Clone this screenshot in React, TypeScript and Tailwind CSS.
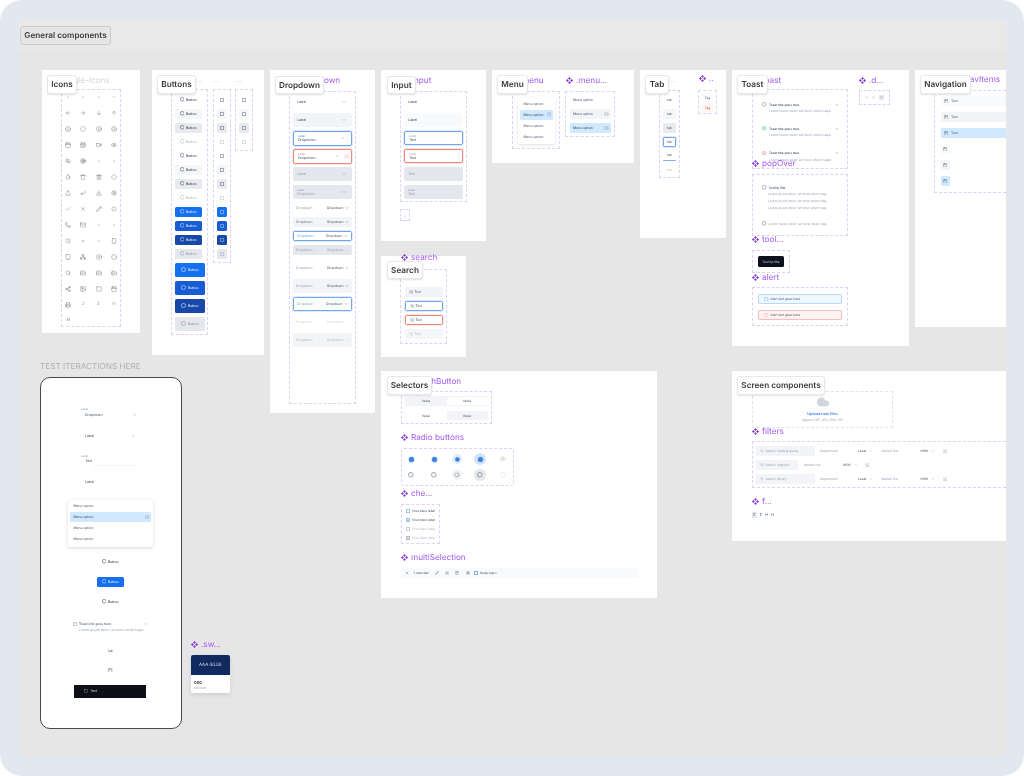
import React from "react";
import {
  ChevronLeft, ChevronRight, ChevronUp, ChevronDown, ArrowLeft, ArrowRight, ArrowDown, ArrowUp,
  Smile, Frown, CircleDashed, Meh, Calendar, CalendarDays, Video, Eye, EyeOff, Target, Timer, Trash, Trash2, Diamond,
  Upload, CornerDownLeft, Download, Settings, Check, X, Pencil, Loader, Phone, Mail, Dot, List, Plus, Minus, Smartphone,
  Tablet, Network, Disc, Circle, Search, HardDrive, Share2, Image, Square, Printer, Cloud, CircleCheck, AlertCircle,
} from "lucide-react";

const BLUE = "border border-[#6fa8ea] shadow-[0_0_0_0.75px_#d5e5f9]";
const RED = "border border-[#e8897e] shadow-[0_0_0_0.75px_#f9dcd8]";

const Comp = () => (
  <svg viewBox="0 0 10 10" className="w-[7px] h-[7px] shrink-0" fill="#7e2fd6">
    <path d="M5 0 7 2 5 4 3 2Z M5 6 7 8 5 10 3 8Z M0 5 2 3 4 5 2 7Z M10 5 8 3 6 5 8 7Z" />
  </svg>
);
const Ring = ({ className = "w-[4.5px] h-[4.5px]", fill = "none" }: { className?: string; fill?: string }) => (
  <svg viewBox="0 0 10 10" className={`shrink-0 ${className}`}>
    <circle cx="5" cy="5" r="4.2" fill={fill} stroke="currentColor" strokeWidth="1.3" />
  </svg>
);

const Panel = ({ className }: { className: string }) => <div className={`absolute bg-white ${className}`} />;
const Dash = ({ className, children }: { className: string; children?: React.ReactNode }) => (
  <div className={`absolute border border-dashed border-[#dcd2f8] rounded-[1px] ${className}`}>{children}</div>
);
const Title = ({ className, children, muted }: { className: string; children: React.ReactNode; muted?: boolean }) => (
  <div className={`absolute flex items-center gap-[3px] h-[10px] text-[8.2px] leading-none whitespace-nowrap ${muted ? "text-[#d6d6d6]" : "text-[#a35af0]"} ${className}`}>
    {!muted && <Comp />}
    <span>{children}</span>
  </div>
);
const Dots = ({ className }: { className: string }) => (
  <div className={`absolute text-[7px] leading-none text-[#b58af0] ${className}`}>...</div>
);
const Tagline = ({ className, children }: { className: string; children: React.ReactNode }) => (
  <div className={`absolute flex items-center justify-center bg-white rounded-[3px] border border-[#e8e8e8] shadow-[0_1px_2px_rgba(0,0,0,0.12)] text-[8.2px] font-semibold text-[#3a3a3a] leading-none whitespace-nowrap ${className}`}>
    {children}
  </div>
);
const T = ({ className = "", children }: { className?: string; children: React.ReactNode }) => (
  <span className={`leading-none whitespace-nowrap translate-y-[0.6px] ${className}`}>{children}</span>
);
const Cell = ({ children }: { children: React.ReactNode }) => (
  <div className="h-[16px] flex items-center justify-center text-[#6b6b6b]">{children}</div>
);

const sm = { size: 4, strokeWidth: 2 };
const md = { size: 6, strokeWidth: 1.6 };
const iconCells: React.ReactNode[] = [
  <ChevronLeft {...sm} />, <ChevronRight {...sm} />, <ChevronUp {...sm} />, <ChevronDown {...sm} />,
  <ArrowLeft {...md} />, <ArrowRight {...md} />, <ArrowDown {...md} />, <ArrowUp {...md} />,
  <Frown {...md} />, <CircleDashed {...md} />, <Smile {...md} />, <Meh {...md} />,
  <Calendar {...md} />, <CalendarDays {...md} />, <Video {...md} />, <Eye {...md} />,
  <EyeOff {...md} />, <Target {...md} />, <ChevronLeft {...sm} />, <ChevronRight {...sm} />,
  <Timer {...md} />, <Trash {...md} />, <Trash2 {...md} />, <Diamond {...md} />,
  <Upload {...md} />, <CornerDownLeft {...md} />, <Download {...md} />, <Settings {...md} />,
  <Check {...md} />, <X {...md} />, <Pencil {...md} />, <Loader {...md} />,
  <Phone {...md} />, <Mail {...md} />, <Dot {...sm} />, <Dot {...sm} />,
  <List {...md} />, <Plus {...sm} />, <Minus {...sm} />, <Smartphone {...md} />,
  <Tablet {...md} />, <Network {...md} />, <Disc {...md} />, <Circle {...md} />,
  <Search {...md} />, <HardDrive {...md} />, <HardDrive {...md} />, <HardDrive {...md} />,
  <Share2 {...md} />, <Image {...md} />, <Square {...md} />, <Calendar {...md} />,
  <Printer {...md} />, <span className="text-[4.5px] text-[#999]">Z</span>, <span className="text-[4.5px] text-[#999]">Σ</span>, <span className="text-[4.5px] text-[#999]">H</span>,
  <span className="text-[4.5px] text-[#888]">N</span>,
];

const styles: Record<string, string> = {
  ghost: "text-[#475467]",
  light: "bg-[#f5f6f8] text-[#475467]",
  mid: "bg-[#e8eaee] text-[#475467]",
  off: "text-[#b4bac4]",
  b1: "bg-[#1570ef] text-[#cfe2fb]",
  b2: "bg-[#175cd3] text-[#cfe2fb]",
  b3: "bg-[#1849a9] text-[#cfe2fb]",
  fill: "bg-[#e4e7ec] text-[#98a2b3]",
};
const Btn = ({ v }: { v: string }) => (
  <div className={`w-[26.5px] h-[10px] rounded-[1.5px] flex items-center justify-center gap-[1.5px] ${styles[v]}`}>
    <Ring />
    <T className="text-[3.4px] font-semibold">Button</T>
  </div>
);
const BtnLg = ({ v }: { v: string }) => (
  <div className={`w-[29.5px] h-[14px] rounded-[1.5px] flex items-center justify-center gap-[2px] ${styles[v]}`}>
    <Ring className="w-[5px] h-[5px]" />
    <T className="text-[3.4px] font-semibold">Button</T>
  </div>
);
const IconBtn = ({ v }: { v: string }) => (
  <div className={`w-[10px] h-[10px] rounded-[1.5px] flex items-center justify-center ${styles[v]}`}>
    <svg viewBox="0 0 10 10" className="w-[4px] h-[4px]" fill="none" stroke="currentColor" strokeWidth="1.3"><rect x="1" y="1" width="8" height="8" rx="1" /></svg>
  </div>
);

const Slot = ({ h, children }: { h: "s" | "m"; children: React.ReactNode }) => (
  <div className={`flex items-center ${h === "m" ? "h-[18px]" : "h-[14px]"}`}>{children}</div>
);
const Chev = ({ c = "text-[#667085]" }: { c?: string }) => <ChevronDown size={4} strokeWidth={2} className={`shrink-0 ${c}`} />;
const DD = ({ box, text, label, tail }: { box: string; text: string; label?: string; tail?: React.ReactNode }) => (
  <div className={`w-full flex items-center pl-[4px] pr-[6px] rounded-[2px] ${box}`}>
    <div className="flex-1 flex flex-col gap-[1px]">
      {label && <T className={`text-[2.8px] ${label}`}>Label</T>}
      <T className="text-[3.6px]">{text}</T>
    </div>
    <Chev />
    {tail}
  </div>
);
const DD2 = ({ box, left, right }: { box: string; left: string; right: string }) => (
  <div className={`w-full flex items-center justify-between pl-[3px] pr-[3px] rounded-[1.5px] ${box}`}>
    <T className={`text-[3.4px] ${left}`}>Dropdown</T>
    <div className={`flex items-center gap-[1.5px] ${right}`}>
      <T className="text-[3.4px]">Dropdown</T>
      <Chev c="text-current" />
    </div>
  </div>
);
const Inp = ({ box, text, label }: { box: string; text: string; label?: string }) => (
  <div className={`w-full flex flex-col justify-center gap-[1px] pl-[4px] rounded-[2px] ${box}`}>
    {label && <T className={`text-[2.8px] ${label}`}>Label</T>}
    <T className="text-[3.6px]">{text}</T>
  </div>
);
const Srch = ({ box, c = "text-[#475467]" }: { box: string; c?: string }) => (
  <div className={`w-full h-[10px] rounded-[1.5px] flex items-center gap-[2px] pl-[4px] ${box} ${c}`}>
    <Search size={4} strokeWidth={2} />
    <T className="text-[3.3px]">Text</T>
  </div>
);
const MenuRow = ({ box = "", text = "text-[#475467]", tick, w = "w-full" }: { box?: string; text?: string; tick?: boolean; w?: string }) => (
  <div className={`h-[10px] ${w} flex items-center justify-between pl-[3.5px] pr-[2px] rounded-[1px] ${box}`}>
    <T className={`text-[3.4px] ${text}`}>Menu option</T>
    {tick && <CircleCheck size={4.5} strokeWidth={1.5} className="text-[#667085]" />}
  </div>
);
const Toast = ({ dot, fill }: { dot: string; fill?: string }) => (
  <div className="h-[24.3px]">
    <div className="flex items-center">
      <span className={`ml-[9px] ${dot}`}><Ring className="w-[4.5px] h-[4.5px]" fill={fill} /></span>
      <T className="text-[3.15px] font-medium text-[#344054] ml-[2.5px] flex-1">Toast title goes here</T>
      <X size={3.5} strokeWidth={2} className="text-[#667085] mr-[9px]" />
    </div>
    <T className="block text-[3.25px] text-[#98a2b3] ml-[16px] mt-[2.5px] h-[4px]">Lorem ipsum dolor set tener etiem hagar</T>
  </div>
);
const Line = () => <T className="block text-[3.2px] text-[#98a2b3]">Lorem ipsum dolor set tener etiem hag</T>;
const Tab = ({ box, c = "text-[#475467]" }: { box: string; c?: string }) => (
  <div className={`w-[12.5px] h-[10px] flex items-center justify-center rounded-[1px] ${box}`}>
    <T className={`text-[3.2px] ${c}`}>tab</T>
  </div>
);
const Nav = ({ box }: { box: string }) => (
  <div className={`h-[10px] w-full flex items-center gap-[3px] pl-[3px] ${box}`}>
    <Calendar size={4.5} strokeWidth={1.6} className="text-[#475467]" />
    <T className="text-[3.4px] text-[#475467]">Text</T>
  </div>
);
const NavI = ({ box }: { box: string }) => (
  <div className={`h-[10px] w-[9px] flex items-center justify-center rounded-[1px] ${box}`}>
    <Calendar size={4.5} strokeWidth={1.6} className="text-[#475467]" />
  </div>
);
const Radio = ({ on, halo, ring = "text-[#7a8494]", fill = "none" }: { on?: boolean; halo: string; ring?: string; fill?: string }) => (
  <div className={`w-[12px] h-[12px] rounded-full flex items-center justify-center ${halo}`}>
    {on ? (
      <span className="w-[5px] h-[5px] rounded-full bg-[#3b82e0] shadow-[0_0_0_0.6px_#a9c8f5]" />
    ) : (
      <span className={ring}><Ring className="w-[5.5px] h-[5.5px]" fill={fill} /></span>
    )}
  </div>
);
const Check4 = ({ box, text, on }: { box: string; text: string; on?: boolean }) => (
  <div className="flex items-center gap-[2px] h-[9px]">
    <span className={`w-[4px] h-[4px] rounded-[0.5px] border flex items-center justify-center ${box}`}>{on && <Check size={3} strokeWidth={2} />}</span>
    <T className={`text-[3.2px] ${text}`}>Checkbox label</T>
  </div>
);
const FilterBox = ({ w, text }: { w: string; text: string }) => (
  <div className={`h-[10px] ${w} bg-[#f2f4f7] rounded-[1px] flex items-center gap-[2px] pl-[4px] text-[#98a2b3] shrink-0`}>
    <Search size={3.5} strokeWidth={2} />
    <T className="text-[3.2px]">{text}</T>
  </div>
);
const Pick = ({ text, w }: { text: string; w: string }) => (
  <div className={`flex items-center gap-[3px] ${w} shrink-0 text-[#475467]`}>
    <T className="text-[3.2px] font-medium">{text}</T>
    <Chev c="text-[#98a2b3]" />
  </div>
);
const FT = ({ w, text }: { w: string; text: string }) => <T className={`text-[3.2px] text-[#98a2b3] ${w} shrink-0`}>{text}</T>;
const Sliders = () => <List size={4.5} strokeWidth={1.6} className="text-[#667085] shrink-0" />;

export default function App() {
  return (
    <div className="relative w-[1024px] h-[776px] overflow-hidden bg-white [font-family:Inter,'Liberation_Sans',sans-serif] [text-rendering:geometricPrecision] blur-[0.5px]">
      <div className="absolute inset-0 bg-[#e2e8f1] rounded-[22px]" />
      <div className="absolute left-[18px] top-[18px] w-[989px] h-[739px] bg-[#e6e6e6] rounded-[6px]">
        <div className="h-[33px] bg-[#e9e9e9] rounded-t-[6px]" />
      </div>
      <div className="absolute left-[20px] top-[26px] w-[91px] h-[19px] flex items-center justify-center rounded-[3px] bg-[#e6e6e6] border border-[#cccccc] text-[8.2px] font-semibold text-[#3a3a3a] whitespace-nowrap">General components</div>

      {/* Icons */}
      <Panel className="left-[42px] top-[70px] w-[98px] h-[263px]" />
      <Title muted className="left-[62px] top-[75px]">single-Icons</Title>
      <Dash className="left-[61px] top-[89px] w-[60px] h-[238px]">
        <div className="grid grid-cols-4 w-[61px] -ml-[1.5px] -mt-[1px]">
          {iconCells.map((c, i) => <Cell key={i}>{c}</Cell>)}
        </div>
      </Dash>
      <Tagline className="left-[47px] top-[75px] w-[30px] h-[19px]">Icons</Tagline>

      {/* Buttons */}
      <Panel className="left-[152px] top-[70px] w-[112px] h-[285px]" />
      <Dots className="left-[196px] top-[76px]" />
      <Dots className="left-[213px] top-[76px]" />
      <Dots className="left-[236px] top-[76px]" />
      <Dash className="left-[171px] top-[89px] w-[37px] h-[246px] pl-[3px] pt-[4.5px] flex flex-col">
        <div className="flex flex-col gap-[4px]">
          {["ghost", "light", "mid", "off", "ghost", "light", "mid", "off", "b1", "b2", "b3", "fill"].map((v, i) => <Btn key={i} v={v} />)}
        </div>
        <div className="flex flex-col gap-[4px] mt-[4px]">
          {["b1", "b2", "b3", "fill"].map((v, i) => <BtnLg key={i} v={v} />)}
        </div>
      </Dash>
      <Dash className="left-[213px] top-[89px] w-[18px] h-[174px] pl-[3px] pt-[4.5px] flex flex-col gap-[4px]">
        {["ghost", "light", "mid", "off", "ghost", "light", "mid", "off", "b1", "b2", "b3", "fill"].map((v, i) => <IconBtn key={i} v={v} />)}
      </Dash>
      <Dash className="left-[235px] top-[89px] w-[18px] h-[62px] pl-[3px] pt-[4.5px] flex flex-col gap-[4px]">
        {["ghost", "light", "mid", "off"].map((v, i) => <IconBtn key={i} v={v} />)}
      </Dash>
      <Tagline className="left-[157px] top-[75px] w-[39px] h-[19px]">Buttons</Tagline>

      {/* Dropdown */}
      <Panel className="left-[270px] top-[70px] w-[105px] h-[343px]" />
      <Title className="left-[291px] top-[75px]">dropdown</Title>
      <Dash className="left-[289px] top-[91px] w-[67px] h-[313px] px-[3px] pt-[1px] text-[#475467]">
        <Slot h="m"><DD box="h-[14px]" text="Label" /></Slot>
        <Slot h="m"><DD box="h-[14px] bg-[#f2f4f7]" text="Label" /></Slot>
        <Slot h="m"><DD box={`h-[15px] ${BLUE}`} text="Dropdown" label="text-[#4a90e2]" /></Slot>
        <Slot h="m"><DD box={`h-[15px] ${RED} !pr-[2px]`} text="Dropdown" label="text-[#e58a80]" tail={<AlertCircle size={5} strokeWidth={1.5} className="text-[#ef9a92] ml-[5px]" />} /></Slot>
        <Slot h="m"><DD box="h-[14px] bg-[#e4e7ec] text-[#98a2b3]" text="Label" /></Slot>
        <Slot h="m"><DD box="h-[14px] bg-[#e4e7ec] text-[#98a2b3]" text="Dropdown" label="text-[#98a2b3]" /></Slot>
        <Slot h="s"><DD2 box="h-[10px]" left="text-[#98a2b3]" right="text-[#475467]" /></Slot>
        <Slot h="s"><DD2 box="h-[10px] bg-[#f2f4f7]" left="text-[#667085]" right="text-[#475467]" /></Slot>
        <Slot h="s"><DD2 box={`h-[10px] ${BLUE}`} left="text-[#6ea5ea]" right="text-[#475467]" /></Slot>
        <Slot h="s"><DD2 box="h-[10px] bg-[#e4e7ec]" left="text-[#98a2b3]" right="text-[#98a2b3]" /></Slot>
        <div className="h-[2px]" />
        <Slot h="m"><DD2 box="h-[14px]" left="text-[#98a2b3]" right="text-[#475467]" /></Slot>
        <Slot h="m"><DD2 box="h-[14px] bg-[#f2f4f7]" left="text-[#98a2b3]" right="text-[#475467]" /></Slot>
        <Slot h="m"><DD2 box={`h-[14px] ${BLUE}`} left="text-[#98a2b3]" right="text-[#475467]" /></Slot>
        <Slot h="m"><DD2 box="h-[14px]" left="text-[#d0d5dd]" right="text-[#d0d5dd]" /></Slot>
        <Slot h="m"><DD2 box="h-[14px] bg-[#f2f4f7]" left="text-[#b4bac4]" right="text-[#b4bac4]" /></Slot>
      </Dash>
      <Tagline className="left-[275px] top-[76px] w-[49px] h-[18px]">Dropdown</Tagline>

      {/* Input */}
      <Panel className="left-[381px] top-[70px] w-[105px] h-[171px]" />
      <Title className="left-[402px] top-[75px]">input</Title>
      <Dash className="left-[400px] top-[91px] w-[67px] h-[111px] px-[3px] pt-[1px] text-[#475467]">
        <Slot h="m"><Inp box="h-[14px]" text="Label" /></Slot>
        <Slot h="m"><Inp box="h-[14px] bg-[#f9fafb]" text="Label" /></Slot>
        <Slot h="m"><Inp box={`h-[14px] ${BLUE}`} text="Text" label="text-[#98a2b3]" /></Slot>
        <Slot h="m"><Inp box={`h-[14px] ${RED}`} text="Text" label="text-[#e58a80]" /></Slot>
        <Slot h="m"><Inp box="h-[14px] bg-[#e4e7ec] text-[#98a2b3]" text="Text" /></Slot>
        <Slot h="m"><Inp box="h-[14px] bg-[#e4e7ec] text-[#98a2b3]" text="Text" label="text-[#98a2b3]" /></Slot>
      </Dash>
      <Dash className="left-[400px] top-[209px] w-[10px] h-[12px] flex items-center justify-center"><T className="text-[3px] text-[#98a2b3]">|</T></Dash>
      <Tagline className="left-[387px] top-[76px] w-[29px] h-[18px]">Input</Tagline>

      {/* Search */}
      <Panel className="left-[381px] top-[256px] w-[85px] h-[101px]" />
      <Title className="left-[401px] top-[252px]">search</Title>
      <Dash className="left-[400px] top-[269px] w-[47px] h-[75px] px-[3.5px] pt-[17px] flex flex-col gap-[4px]">
        <Srch box="bg-[#f2f4f7]" />
        <Srch box={BLUE} />
        <Srch box={RED} />
        <Srch box="bg-[#f5f6f8]" c="text-[#b4bac4]" />
      </Dash>
      <Tagline className="left-[387px] top-[261px] w-[36px] h-[18px]">Search</Tagline>

      {/* Menu */}
      <Panel className="left-[492px] top-[70px] w-[142px] h-[93px]" />
      <Title className="left-[512px] top-[75px]">menu</Title>
      <Title className="left-[566px] top-[75px]">.menu...</Title>
      <Dash className="left-[512px] top-[91px] w-[48px] h-[58px] px-[5px] pt-[5px]">
        <div className="w-[37px] h-[47px] bg-white rounded-[2px] shadow-[0_1px_3px_rgba(0,0,0,0.12)] px-[2px] pt-[1.5px] flex flex-col gap-[1px]">
          <MenuRow />
          <MenuRow box="bg-[#d1e9ff]" text="text-[#344054]" tick />
          <MenuRow />
          <MenuRow />
        </div>
      </Dash>
      <Dash className="left-[565px] top-[91px] w-[50px] h-[46px] px-[3.5px] pt-[3px] flex flex-col gap-[4px]">
        <MenuRow />
        <MenuRow box="bg-[#f2f4f7]" tick />
        <MenuRow box="bg-[#d1e9ff]" text="text-[#344054]" tick />
      </Dash>
      <Tagline className="left-[497px] top-[75px] w-[31px] h-[19px]">Menu</Tagline>

      {/* Tab */}
      <Panel className="left-[640px] top-[70px] w-[86px] h-[168px]" />
      <Dots className="left-[669px] top-[76px]" />
      <Title className="left-[699px] top-[73px]">..</Title>
      <Dash className="left-[659px] top-[90px] w-[21px] h-[88px] pl-[3px] pt-[3.5px] flex flex-col gap-[4px]">
        <Tab box="" />
        <Tab box="bg-[#f5f6f8]" />
        <Tab box="bg-[#e8eaee]" />
        <Tab box={BLUE} />
        <Tab box="border-b border-[#7fb0ea]" />
        <Tab box="" c="text-[#b4bac4]" />
      </Dash>
      <Dash className="left-[698px] top-[90px] w-[19px] h-[24px] px-[3px] pt-[2px] flex flex-col gap-[1px]">
        <div className="h-[9px] flex items-center justify-center bg-[#f9fafb]"><T className="text-[3.2px] text-[#667085]">Tag</T></div>
        <div className="h-[9px] flex items-center justify-center bg-[#fff5f4]"><T className="text-[3.2px] text-[#f04438]">Tag</T></div>
      </Dash>
      <Tagline className="left-[645px] top-[75px] w-[24px] h-[19px]">Tab</Tagline>

      {/* Toast */}
      <Panel className="left-[732px] top-[70px] w-[177px] h-[276px]" />
      <Title className="left-[752px] top-[75px]">toast</Title>
      <Dash className="left-[752px] top-[89px] w-[96px] h-[80px] pt-[12px]">
        <Toast dot="text-[#7a8494]" />
        <Toast dot="text-[#8ad4ab]" fill="#c6f0d8" />
        <Toast dot="text-[#f0a9a9]" fill="#fbd5d5" />
      </Dash>
      <Title className="left-[752px] top-[158px]">popOver</Title>
      <Dash className="left-[752px] top-[174px] w-[96px] h-[62px] pl-[9px] pt-[10px]">
        <div className="flex items-center gap-[2px] mb-[2.5px] text-[#7a8494]">
          <Ring />
          <T className="text-[3.2px] font-medium text-[#475467]">Tooltip title</T>
        </div>
        <div className="flex flex-col gap-[3.6px] ml-[6px]"><Line /><Line /><Line /></div>
        <div className="flex items-center gap-[2px] mt-[12.5px] text-[#7a8494]">
          <Ring />
          <Line />
        </div>
      </Dash>
      <Title className="left-[752px] top-[234px]">tool...</Title>
      <Dash className="left-[752px] top-[250px] w-[38px] h-[23px] flex items-center justify-center">
        <div className="w-[26px] h-[10.5px] bg-[#0c111d] rounded-[1.5px] flex items-center justify-center"><T className="text-[3.2px] text-[#d0d5dd]">Tool tip title</T></div>
      </Dash>
      <Title className="left-[752px] top-[272px]">alert</Title>
      <Dash className="left-[752px] top-[287px] w-[96px] h-[39px] px-[5px] pt-[5.5px] flex flex-col gap-[5.5px]">
        <div className="h-[10.5px] bg-[#eff8ff] border border-[#b2ddff] rounded-[2px] flex items-center gap-[2px] pl-[5px] text-[#7fb0ea]">
          <Ring />
          <T className="text-[3.2px] text-[#475467]">Alert text goes here</T>
        </div>
        <div className="h-[10.5px] bg-[#fef3f2] border border-[#fbbdb6] rounded-[2px] flex items-center gap-[2px] pl-[5px] text-[#f0a9a9]">
          <Ring />
          <T className="text-[3.2px] text-[#475467]">Alert text goes here</T>
        </div>
      </Dash>
      <Title className="left-[859px] top-[75px]">.d...</Title>
      <Dash className="left-[859px] top-[90px] w-[31px] h-[15px] flex items-center justify-center gap-[4px] text-[#667085]">
        <X size={3} strokeWidth={2} />
        <X size={3} strokeWidth={2} />
        <span className="w-[5px] h-[5px] bg-[#e4e7ec] flex items-center justify-center"><X size={3} strokeWidth={2} /></span>
      </Dash>
      <Tagline className="left-[737px] top-[75px] w-[31px] h-[19px]">Toast</Tagline>

      {/* Navigation */}
      <Panel className="left-[915px] top-[70px] w-[91px] h-[257px]" />
      <Title className="left-[955px] top-[74px]">navItems</Title>
      <div className="absolute left-[934px] top-[90px] w-[72px] h-[103px] border-l border-t border-b border-dashed border-[#dcd2f8] pl-[5.5px] pt-[5px] flex flex-col gap-[6px]">
        <Nav box="bg-[#f9fafb]" />
        <Nav box="bg-[#f2f4f7]" />
        <Nav box="bg-[#d1e9ff]" />
        <NavI box="bg-[#f9fafb]" />
        <NavI box="bg-[#f2f4f7]" />
        <NavI box="bg-[#d1e9ff]" />
      </div>
      <Tagline className="left-[920px] top-[75px] w-[51px] h-[19px]">Navigation</Tagline>

      {/* Selectors */}
      <Panel className="left-[381px] top-[371px] w-[276px] h-[227px]" />
      <Title className="left-[401px] top-[376px]">switchButton</Title>
      <Dash className="left-[401px] top-[391px] w-[91px] h-[33px] px-[3px] pt-[4px] flex flex-col gap-[5px]">
        <div className="h-[9.5px] bg-[#f2f4f7] rounded-[2px] flex p-[0.5px]">
          <div className="flex-1 flex items-center justify-center"><T className="text-[3.2px] text-[#475467]">Value</T></div>
          <div className="flex-1 flex items-center justify-center bg-white rounded-[2px]"><T className="text-[3.2px] text-[#475467]">Value</T></div>
        </div>
        <div className="h-[9.5px] bg-[#f2f4f7] rounded-[2px] flex p-[0.5px]">
          <div className="flex-1 flex items-center justify-center bg-white rounded-[2px]"><T className="text-[3.2px] text-[#475467]">Value</T></div>
          <div className="flex-1 flex items-center justify-center"><T className="text-[3.2px] text-[#475467]">Value</T></div>
        </div>
      </Dash>
      <Title className="left-[401px] top-[432px]">Radio buttons</Title>
      <Dash className="left-[401px] top-[448px] w-[113px] h-[38px] rounded-[3px] pl-[3px] pt-[4px] grid gap-y-[4px] gap-x-[11px] content-start [grid-template-columns:repeat(5,12px)]">
        <Radio on halo="" />
        <Radio on halo="" />
        <Radio on halo="bg-[#e3eefc] scale-[0.85]" />
        <Radio on halo="bg-[#d3e3fa]" />
        <Radio halo="" ring="text-[#e4e7ec]" fill="#e4e7ec" />
        <Radio halo="" />
        <Radio halo="" />
        <Radio halo="bg-[#f0f1f3] scale-[0.85]" />
        <Radio halo="bg-[#e4e7ec]" />
        <Radio halo="" ring="text-[#e4e7ec]" />
      </Dash>
      <Title className="left-[401px] top-[488px]">che...</Title>
      <Dash className="left-[401px] top-[504px] w-[39px] h-[40px] pl-[4px] pt-[1.5px]">
        <Check4 box="border-[#a3c2ec]" text="text-[#475467]" />
        <Check4 box="border-[#a3c2ec] bg-[#d3e3fa] text-[#4a80d0]" text="text-[#475467]" on />
        <Check4 box="border-[#c8cdd5]" text="text-[#b4bac4]" />
        <Check4 box="border-[#b4bac4] bg-[#e4e7ec] text-[#667085]" text="text-[#b4bac4]" on />
      </Dash>
      <Title className="left-[401px] top-[552px]">multiSelection</Title>
      <div className="absolute left-[401px] top-[568px] w-[237px] h-[10px] bg-[#f8fafb] rounded-[1px] flex items-center pl-[3.5px] text-[#475467]">
        <X size={4} strokeWidth={2} />
        <T className="text-[3.2px] ml-[5px]">1 selected</T>
        <Pencil size={4} strokeWidth={2} className="ml-[6px]" />
        <Loader size={4} strokeWidth={2} className="ml-[6px]" />
        <Trash size={4} strokeWidth={2} className="ml-[6.5px]" />
        <Settings size={4} strokeWidth={2} className="ml-[6.5px]" />
        <span className="w-[4px] h-[4px] rounded-[0.5px] border border-[#7fb0ea] ml-[4.5px]" />
        <T className="text-[3.2px] ml-[2px]">Keep signs</T>
      </div>
      <Tagline className="left-[387px] top-[376px] w-[45px] h-[19px]">Selectors</Tagline>

      {/* Screen components */}
      <Panel className="left-[732px] top-[371px] w-[274px] h-[170px]" />
      <Dash className="left-[752px] top-[391px] w-[141px] h-[37px] flex flex-col items-center pt-[3px] !border-[#e4e4e8]">
        <Cloud size={14} strokeWidth={1} className="text-[#d0d5dd] fill-[#d0d5dd]" />
        <T className="text-[3.8px] font-semibold text-[#2f7de6] mt-[2px]">Upload new files</T>
        <T className="text-[3.2px] text-[#98a2b3] mt-[3.5px]">Approx PDF, JPG, PNG, PPI</T>
      </Dash>
      <Title className="left-[752px] top-[426px]">filters</Title>
      <div className="absolute left-[752px] top-[441px] w-[254px] h-[47px] border-l border-t border-b border-dashed border-[#dcd2f8] pl-[3px] pt-[4px] flex flex-col gap-[4px]">
        <div className="flex items-center h-[10px]">
          <FilterBox w="w-[59px]" text="Search catalog group" />
          <FT w="w-[38px] ml-[5px]" text="Department" />
          <Pick w="w-[23.5px]" text="Local" />
          <FT w="w-[39px]" text="Market line" />
          <Pick w="w-[22px]" text="0100" />
          <Sliders />
        </div>
        <div className="flex items-center h-[10px]">
          <FilterBox w="w-[42px]" text="Search mapsets" />
          <FT w="w-[39px] ml-[6px]" text="Market line" />
          <Pick w="w-[22px]" text="0100" />
          <Sliders />
        </div>
        <div className="flex items-center h-[10px]">
          <FilterBox w="w-[59px]" text="Search library" />
          <FT w="w-[38px] ml-[5px]" text="Department" />
          <Pick w="w-[23.5px]" text="Local" />
          <FT w="w-[39px]" text="Market line" />
          <Pick w="w-[22px]" text="0100" />
          <Sliders />
        </div>
      </div>
      <Title className="left-[752px] top-[496px]">f...</Title>
      <div className="absolute left-[751.5px] top-[512px] flex items-center gap-[3px] text-[4px] text-[#667085] leading-none">
        <span className="w-[5px] h-[6px] bg-[#e4e7ec] flex items-center justify-center">Z</span>
        <span>Σ</span>
        <span>H</span>
        <span>N</span>
      </div>
      <Tagline className="left-[737px] top-[376px] w-[88px] h-[19px]">Screen components</Tagline>

      {/* Test area */}
      <div className="absolute left-[40px] top-[361px] text-[8.2px] leading-[10px] text-[#b0b0b0] whitespace-nowrap">TEST ITERACTIONS HERE</div>
      <div className="absolute left-[40px] top-[377px] w-[142px] h-[351.5px] bg-white border-[1.5px] border-[#4a4a4a] rounded-[10px] text-[#475467]">
        <div className="relative w-full h-full -left-[41.5px] -top-[378.5px]">
          <T className="absolute left-[81.5px] top-[407.5px] text-[2.8px] text-[#98a2b3]">Label</T>
          <div className="absolute left-[85.5px] top-[413px] w-[52px] flex items-center justify-between">
            <T className="text-[3.6px]">Dropdown</T><Chev />
          </div>
          <div className="absolute left-[85.5px] top-[434.5px] w-[50px] flex items-center justify-between">
            <T className="text-[3.6px]">Label</T><Chev />
          </div>
          <T className="absolute left-[81.5px] top-[454px] text-[2.8px] text-[#98a2b3]">Label</T>
          <T className="absolute left-[85.5px] top-[459.5px] text-[3.6px]">Text</T>
          <div className="absolute left-[93px] top-[465.5px] w-[44px] h-px bg-[#f2f4f7]" />
          <T className="absolute left-[85.5px] top-[480.5px] text-[3.6px]">Label</T>
          <div className="absolute left-[68.5px] top-[500px] w-[85px] h-[47px] bg-white rounded-[2px] shadow-[0_1px_4px_rgba(0,0,0,0.15)] px-[2px] pt-[1.5px] flex flex-col gap-[1px]">
            <MenuRow />
            <MenuRow box="bg-[#d1e9ff]" text="text-[#344054]" tick />
            <MenuRow />
            <MenuRow />
          </div>
          <div className="absolute left-[97.5px] top-[557px]"><Btn v="ghost" /></div>
          <div className="absolute left-[97.5px] top-[577px]"><Btn v="b1" /></div>
          <div className="absolute left-[97.5px] top-[597px]"><Btn v="ghost" /></div>
          <div className="absolute left-[73px] top-[622px] flex items-center gap-[2px] w-[75px]">
            <span className="text-[#7a8494]"><Ring /></span>
            <T className="text-[3.3px] font-medium flex-1">Toast info goes here</T>
            <X size={3.5} strokeWidth={2} className="text-[#98a2b3]" />
          </div>
          <T className="absolute left-[79.5px] top-[628.5px] text-[3.4px] text-[#98a2b3]">Lorem ipsum dolor set tener etiem fugat</T>
          <T className="absolute left-[108.5px] top-[649px] text-[3.2px]">tab</T>
          <Calendar size={4.5} strokeWidth={1.6} className="absolute left-[108.5px] top-[668px]" />
          <div className="absolute left-[74.5px] top-[685px] w-[72px] h-[13.5px] bg-[#0c0f16] flex items-center pl-[10px] gap-[2px] text-[#d0d5dd]">
            <Square size={4} strokeWidth={1.8} />
            <T className="text-[3.6px]">Text</T>
          </div>
        </div>
      </div>

      {/* Swatch */}
      <Title className="left-[191px] top-[639px]">.sw...</Title>
      <div className="absolute left-[191px] top-[655px] w-[38.5px] h-[38px] bg-white rounded-[2px] shadow-[0_2px_4px_rgba(0,0,0,0.1)] overflow-hidden">
        <div className="h-[20px] bg-[#10295f] flex items-center justify-center"><T className="text-[4.4px] text-[#dbe3f2]">AAA 00.00</T></div>
        <T className="block text-[4px] font-semibold text-[#333] ml-[3px] mt-[5px]">000</T>
        <T className="block text-[2.8px] text-[#98a2b3] ml-[3px] mt-[1.5px]">#000000</T>
      </div>
    </div>
  );
}
